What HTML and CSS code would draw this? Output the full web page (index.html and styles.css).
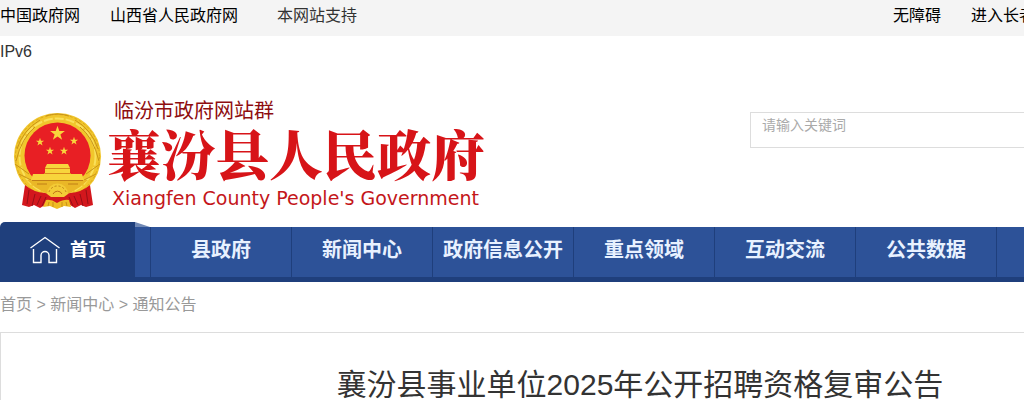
FILE: index.html
```html
<!DOCTYPE html>
<html lang="zh-CN">
<head>
<meta charset="utf-8">
<title>襄汾县人民政府</title>
<link rel="stylesheet" href="styles.css">
</head>
<body>
<div class="page">
  <div class="topbar">
    <div class="topbar-left"><a href="#">中国政府网</a><a href="#">山西省人民政府网</a><span class="support">本网站支持 IPv6</span></div>
    <div class="topbar-right"><a href="#">无障碍</a><a href="#">进入长者模式</a></div>
  </div>
  <header class="header">
    <a class="brand" href="#">
      <svg class="emblem" viewBox="0 0 90 98" aria-hidden="true">
        <defs>
          <path id="star" d="M0-10 2.3-3.1H9.5L3.7 1.2 5.9 8.1 0 3.8-5.9 8.1-3.7 1.2-9.5-3.1H-2.3Z"/>
        </defs>
        <circle cx="44.500" cy="44.500" r="43.500" fill="#f1c62c"/>
        <circle cx="44.500" cy="44.500" r="42" fill="none" stroke="#dba81c" stroke-width="1" stroke-dasharray="3 2"/>
        <circle cx="44.500" cy="44.500" r="38" fill="none" stroke="#fae05a" stroke-width="2" stroke-dasharray="9 2"/>
        <path d="M4 37Q10 18 27 8M3 49Q9 25 22 15M33 4q11-4 23 0M85 37Q79 18 62 8M86 49Q80 25 67 15M2 52l14 10M87 52 73 62M6 62l12 6M83 62l-12 6" fill="none" stroke="#c99318" stroke-width="1"/>
        <circle cx="44.500" cy="43.500" r="33" fill="#e81f24"/>
        <g fill="#f8d53c">
          <use href="#star" transform="translate(44.500 21.500) scale(.78)"/>
          <use href="#star" transform="translate(27 30) scale(.43)"/>
          <use href="#star" transform="translate(61 29) scale(.43)"/>
          <use href="#star" transform="translate(37 39) scale(.43)"/>
          <use href="#star" transform="translate(51 39) scale(.43)"/>
          <path d="M34 52h21l2 4H32ZM32 57h25v4H32ZM20 62h49l2 6H18Z"/>
        </g>
        <path d="M32 56.500h25M31 61.500h27" stroke="#d98a1c" stroke-width="1"/>
        <path d="M14 68h61l-8 7-10 6H32l-10-6Z" fill="#eab727"/>
        <path d="M19 68.500h51M24 72h10M55 72h10" stroke="#c07f17" stroke-width="1"/>
        <path d="M12 73q8 7 20 8l6 2h13l6-2q12-1 20-8l3 20-7 2-5-2-6 3-5-3H32l-5 3-6-3-5 2-7-2Z" fill="#d3171d"/>
        <path d="m16 78-2 14m8-10-3 12m9-10-4 9m49-15 2 14m-8-10 3 12m-9-10 4 9M33 85l-4 9M56 85l4 9" stroke="#960f16" fill="none"/>
        <path d="M33 88q5-1 11 3 7-4 12-3l2 7-7-1-7 3-7-3-7 1Z" fill="#efbd25"/>
        <path d="m36 90-1 4M40 90v5M49 90v5M53 90l1 4" stroke="#c98d18" fill="none"/>
        <path d="M34 82a10.500 10.500 0 0 1 21 0l-4 3H38Z" fill="#f3cb36"/>
        <path d="M36 80a9 9 0 0 1 17 0" fill="none" stroke="#bf8218" stroke-width="1" stroke-dasharray="2 2"/>
        <path d="M40 82a5 5 0 0 1 9 0" fill="none" stroke="#c07018" stroke-width="1"/>
      </svg>
      <span class="brand-text">
        <span class="brand-group">临汾市政府网站群</span>
        <span class="brand-name">襄汾县人民政府</span>
        <span class="brand-en">Xiangfen County People's Government</span>
      </span>
    </a>
    <form class="search"><input class="search-input" type="text" placeholder="请输入关键词" aria-label="请输入关键词"></form>
  </header>
  <nav class="nav">
    <a class="nav-home" href="#">
      <svg class="home-icon" viewBox="0 0 32 30" aria-hidden="true"><path d="M1.500 13 16 2.500 30.500 13M4.500 14v13.500h7.500v-7a4 4 0 0 1 8 0v7h7.500V14"/></svg>
      <span>首页</span>
    </a>
    <svg class="nav-fold" viewBox="0 0 15 5" aria-hidden="true"><path d="M0 0 15 5H0Z"/></svg>
    <div class="nav-list">
      <a href="#">县政府</a><a href="#">新闻中心</a><a href="#">政府信息公开</a><a href="#">重点领域</a><a href="#">互动交流</a><a href="#">公共数据</a><a href="#" aria-label="更多"></a>
    </div>
  </nav>
  <div class="crumbs"><a href="#">首页</a> &gt; <a href="#">新闻中心</a> &gt; <a href="#">通知公告</a></div>
  <main class="article">
    <h1>襄汾县事业单位2025年公开招聘资格复审公告</h1>
  </main>
</div>
</body>
</html>
```
FILE: styles.css
```css
* { box-sizing: border-box; }
html { overflow: hidden; }
body {
  margin: 0;
  background: #fff;
  color: #333;
  font: 16px/36px "Liberation Sans", "Noto Sans CJK SC", sans-serif;
}
a { color: inherit; text-decoration: none; }
.page { min-width: 1280px; }

.topbar {
  display: flex;
  height: 36px;
  line-height: 32px;
  background: #f4f4f4;
}
.topbar a { color: #000; }
.topbar-left { width: 380px; line-height: 36px; margin-top: -2px; }
.topbar-left a { margin-right: 30px; }
.support { margin-left: 9px; }
.topbar-right { display: flex; gap: 30px; margin-left: 513px; }

.header {
  display: flex;
  align-items: flex-start;
  height: 186px;
  padding-top: 62px;
}
.brand { display: flex; width: 750px; padding-left: 13px; }
.emblem { width: 90px; height: 98px; margin-top: 14px; }
.brand-text { display: flex; flex-direction: column; padding-left: 4px; }
.brand-group {
  padding-left: 7px;
  color: #8e0d10;
  font-size: 20px;
  line-height: 26px;
}
.brand-name {
  color: #d71418;
  font-family: "Noto Serif CJK SC", "Noto Sans CJK SC", serif;
  font-size: 54px;
  font-weight: 900;
  line-height: 58px;
}
.brand-en {
  padding-left: 5px;
  color: #c4161a;
  font-family: "DejaVu Sans", sans-serif;
  font-size: 19px;
  line-height: 32px;
}
.search { width: 450px; margin-top: 14px; }
.search-input {
  display: block;
  width: 100%;
  height: 36px;
  padding: 0 11px 10px;
  border: 1px solid #ddd;
  color: #333;
  font: 14px "Liberation Sans", "Noto Sans CJK SC", sans-serif;
}
.search-input::placeholder { color: #aaa; }

.nav {
  display: flex;
  align-items: flex-end;
  height: 60px;
  position: relative;
}
.nav-home {
  display: flex;
  align-items: center;
  gap: 9px;
  width: 135px;
  height: 60px;
  padding: 0 0 5px 29px;
  border-radius: 5px 0 0 0;
  background: #1f3f7c;
  color: #fff;
  font-size: 18px;
  font-weight: 700;
}
.home-icon { width: 32px; height: 30px; fill: none; stroke: #fff; stroke-width: 1.4; }
.nav-fold { position: absolute; left: 135px; top: 0; width: 15px; height: 5px; fill: #7189b5; }
.nav-list {
  display: flex;
  flex: 1;
  height: 55px;
  padding-left: 15px;
  border-bottom: 5px solid #1f3f7c;
  background: #2d5298;
}
.nav-list a {
  width: 141px;
  border-left: 1px solid #1f3f7c;
  color: #e8f1ff;
  font-size: 20px;
  font-weight: 700;
  line-height: 46px;
  text-align: center;
}

.crumbs { height: 50px; line-height: 46px; color: #999; }
.article { padding: 32px 20px; border: 1px solid #ddd; }
.article h1 {
  margin: 0;
  font-size: 30px;
  font-weight: 400;
  line-height: 40px;
  text-align: center;
}
```
